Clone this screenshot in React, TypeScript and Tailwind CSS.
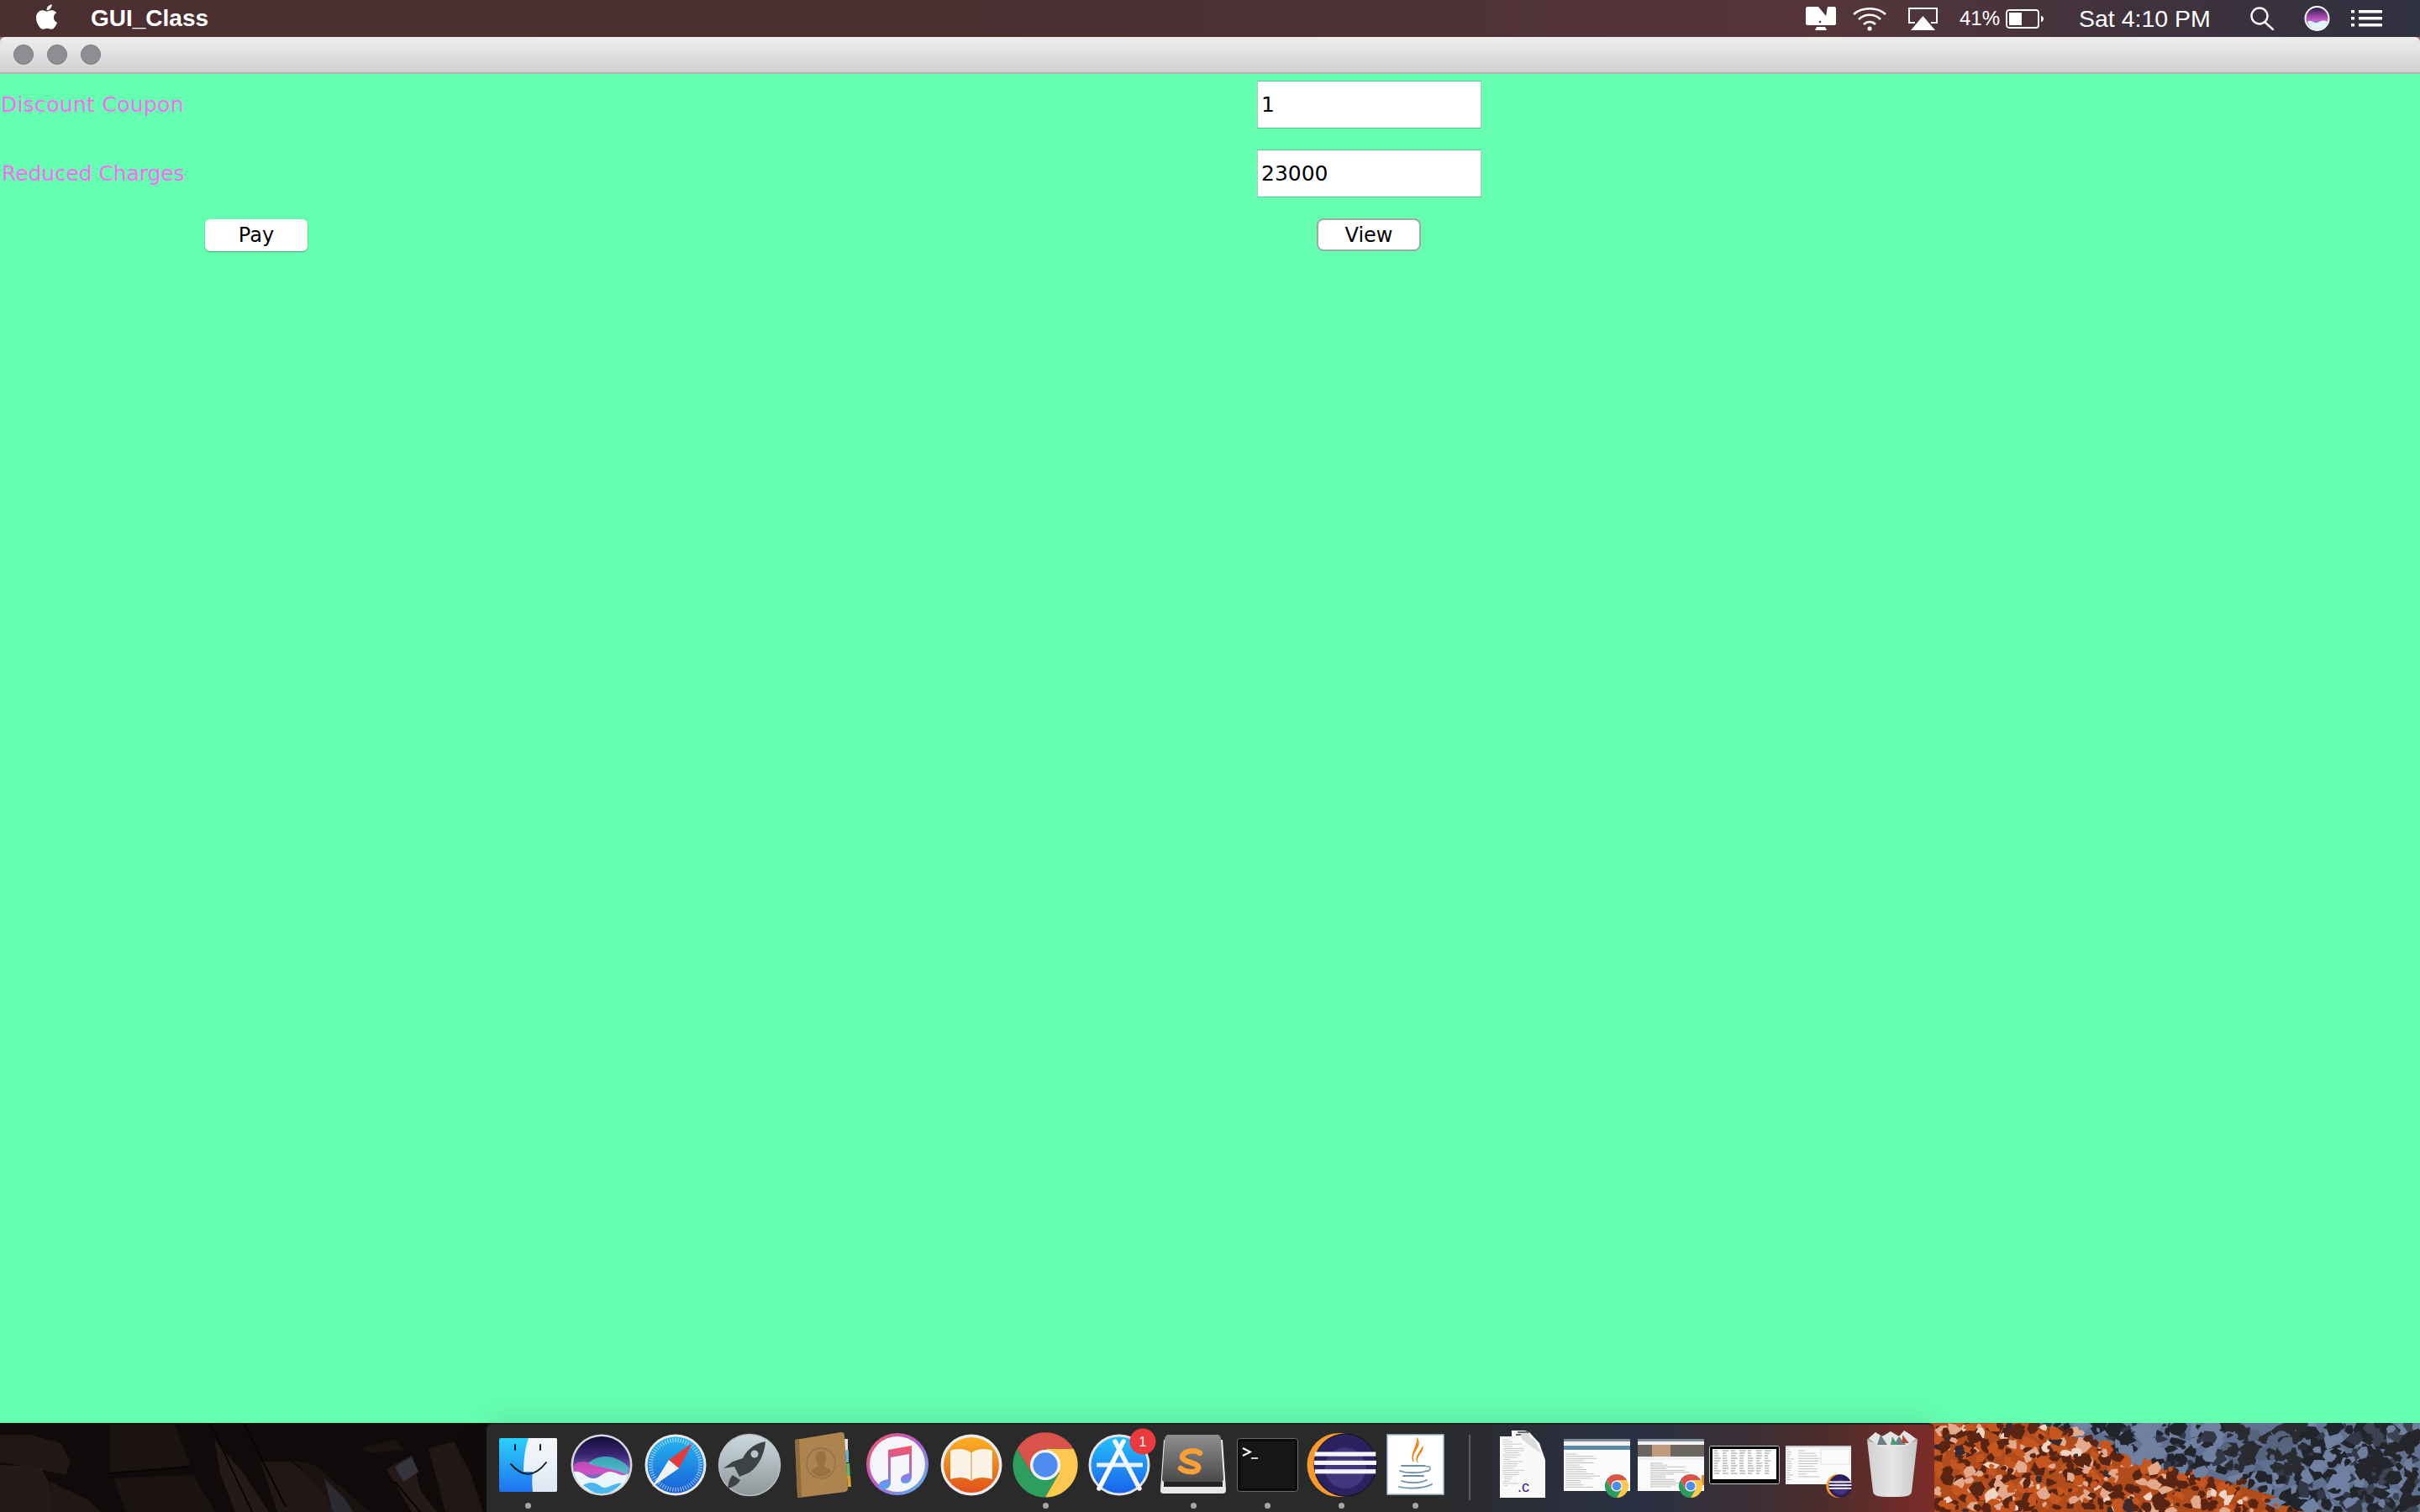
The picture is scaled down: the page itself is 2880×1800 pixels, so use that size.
import { FaApple } from 'react-icons/fa';

// small seeded random so the wallpaper and the thumbnails come out the same every time
function makeRandom(seed: number) {
  let s = seed;
  return () => {
    s = (s * 16807) % 2147483647;
    return (s - 1) / 2147483646;
  };
}

function blob(rand: () => number, x: number, y: number, w: number, h: number) {
  const pts: string[] = [];
  for (let i = 0; i < 6; i++) {
    const a = (i / 6) * Math.PI * 2;
    const k = 0.5 + rand() * 0.7;
    pts.push(`${(x + Math.cos(a) * w * k).toFixed(1)},${(y + Math.sin(a) * h * k).toFixed(1)}`);
  }
  return pts.join(' ');
}

const MOUNTAIN = (() => {
  const rand = makeRandom(4711);
  const items: { points: string; fill: string }[] = [];
  for (let i = 0; i < 1000; i++) {
    const x = rand() * 578;
    const y = rand() * 106;
    const edge = 120 + y * 3.2 + 25 * Math.sin(y / 9);
    const orange = x < edge;
    const r = rand();
    let fill: string;
    if (orange) {
      fill = r < 0.42 ? '#5a2412' : r < 0.58 ? '#e3a98c' : r < 0.64 ? '#f2d4c4' : r < 0.95 ? '#c5561f' : '#3a2a2e';
    } else if (x > 345 && x < 440 && y < 60) {
      fill = r < 0.78 ? '#2a2b31' : '#56647e';
    } else if (x > 510) {
      fill = r < 0.6 ? '#25262c' : r < 0.85 ? '#3d4350' : '#6d7f9c';
    } else {
      fill = r < 0.42 ? '#22242b' : r < 0.55 ? '#323846' : '#6f80a0';
    }
    const size = orange ? 3 + rand() * 7 : 3 + rand() * 10;
    items.push({ points: blob(rand, x, y, size, size * (0.6 + rand() * 0.6)), fill });
  }
  return items;
})();

const ROCKS = [
  '0,14 35,14 72,24 84,46 78,62 40,54 0,46',
  '130,2 208,2 226,50 180,56 130,60',
  '0,50 48,52 60,75 62,106 0,106',
  '60,70 105,92 120,106 62,106',
  '135,66 230,62 256,106 150,106',
  '255,20 290,60 320,106 280,106 262,60',
  '310,46 345,46 378,70 400,106 330,106',
  '350,45 375,50 440,106 400,106 372,68',
  '460,55 490,38 500,80 520,106 490,106',
  '510,30 540,22 560,60 575,106 530,106',
  '430,30 470,20 480,32 440,36',
];

function LeftWallpaper() {
  return (
    <svg viewBox="0 0 579 106" preserveAspectRatio="none" className="block h-full w-[579px] shrink-0">
      <rect width="579" height="106" fill="#100b0a" />
      {ROCKS.map((p, i) => (
        <polygon key={i} points={p} fill={i % 3 === 0 ? '#211816' : i % 3 === 1 ? '#1b1311' : '#251a17'} />
      ))}
      <polygon points="470,52 490,40 498,58 480,70" fill="#35343a" />
      <polygon points="386,66 410,90 420,106 396,106" fill="#2c2b31" />
      <path d="M250 0L300 106M290 0L340 100M470 70L500 106M130 60L226 52" stroke="#080505" strokeWidth="2" fill="none" />
    </svg>
  );
}

function RightWallpaper() {
  return (
    <svg viewBox="0 0 578 106" preserveAspectRatio="none" className="block h-full min-w-0 flex-1">
      <rect width="578" height="106" fill="#5f7090" />
      <polygon points="0,0 125,0 200,30 300,55 465,106 0,106" fill="#b04c1c" />
      {MOUNTAIN.map((b, i) => (
        <polygon key={i} points={b.points} fill={b.fill} />
      ))}
    </svg>
  );
}

function Finder() {
  return (
    <>
      <defs>
        <linearGradient id="finderBlue" x1="0" y1="0" x2="0" y2="1">
          <stop offset="0" stopColor="#2bd0fb" />
          <stop offset="1" stopColor="#1f72f0" />
        </linearGradient>
        <linearGradient id="finderWhite" x1="0" y1="0" x2="0" y2="1">
          <stop offset="0" stopColor="#f6f8fa" />
          <stop offset="1" stopColor="#dce8f3" />
        </linearGradient>
      </defs>
      <rect x="10" y="12" width="69" height="64" rx="2" fill="url(#finderBlue)" />
      <path d="M45 12H77a2 2 0 0 1 2 2V74a2 2 0 0 1-2 2H50C49 66 49 60 50 52H39C39 36 41 24 45 12Z" fill="url(#finderWhite)" />
      <path d="M29 20V26M59 20V26" stroke="#1a1a22" strokeWidth="2" strokeLinecap="round" />
      <path d="M24 43C38 59 52 59 66 41" fill="none" stroke="#1a1a22" strokeWidth="2" strokeLinecap="round" />
    </>
  );
}

function Siri() {
  return (
    <>
      <defs>
        <linearGradient id="siriBg" x1="0" y1="0" x2="0" y2="1">
          <stop offset="0" stopColor="#120a36" />
          <stop offset="0.35" stopColor="#3c2a78" />
          <stop offset="0.6" stopColor="#8a62b4" />
          <stop offset="1" stopColor="#2c86d8" />
        </linearGradient>
      </defs>
      <circle cx="44" cy="44" r="36.5" fill="#d8d8dc" />
      <circle cx="44" cy="44" r="34" fill="url(#siriBg)" />
      <path d="M11 44C20 36 32 42 42 46S60 44 76 52L74 60C58 54 30 54 13 58Z" fill="#e34bc3" opacity="0.75" />
      <path d="M28 42C36 34 50 32 60 36S72 42 77 48L74 56C60 48 42 48 28 42Z" fill="#35d8d0" opacity="0.7" />
      <path d="M11 52C20 50 26 60 34 60S46 52 54 52 68 60 76 54C74 66 62 78 44 78S14 66 11 52Z" fill="#eaf7fc" />
      <path d="M22 68C32 62 38 66 44 70S60 64 68 66C60 74 54 78 44 78S30 74 22 68Z" fill="#4bb6ee" />
    </>
  );
}

function Safari() {
  const ticks = Array.from({ length: 60 }, (_, i) => (i / 60) * Math.PI * 2);
  return (
    <>
      <defs>
        <linearGradient id="safariBg" x1="0" y1="0" x2="0" y2="1">
          <stop offset="0" stopColor="#24b6ee" />
          <stop offset="1" stopColor="#1a5fd8" />
        </linearGradient>
      </defs>
      <circle cx="44" cy="44" r="36.5" fill="#e8e8ec" />
      <circle cx="44" cy="44" r="33.5" fill="url(#safariBg)" />
      {ticks.map((a, i) => (
        <line
          key={i}
          x1={44 + Math.cos(a) * 32}
          y1={44 + Math.sin(a) * 32}
          x2={44 + Math.cos(a) * 27}
          y2={44 + Math.sin(a) * 27}
          stroke="#ffffff"
          strokeWidth="0.8"
          opacity="0.85"
        />
      ))}
      <polygon points="64,18 48,48 36,38" fill="#e63a3a" />
      <polygon points="16,70 48,48 36,38" fill="#f2f2f2" />
    </>
  );
}

function Launchpad() {
  return (
    <>
      <defs>
        <linearGradient id="lpBg" x1="0" y1="0" x2="0" y2="1">
          <stop offset="0" stopColor="#cbdae0" />
          <stop offset="1" stopColor="#8e9698" />
        </linearGradient>
      </defs>
      <circle cx="44" cy="44" r="36.5" fill="url(#lpBg)" stroke="#b9bec0" strokeWidth="1.5" />
      <path d="M63 16C52 18 42 24 36 36L24 40 13 48 26 46 32 58 44 53C54 46 62 32 63 16Z" fill="#3c4245" />
      <path d="M24 56C20 60 19 66 18 72 24 70 30 68 33 62Z" fill="#3c4245" />
      <circle cx="50" cy="31" r="4.5" fill="#b8c4ca" />
    </>
  );
}

function Contacts() {
  return (
    <>
      <path d="M68 13H73V31H70Z" fill="#e2e2e2" />
      <path d="M70 26L74 27V41H71Z" fill="#5fb8d6" />
      <path d="M71 42L75 42 76 59H72Z" fill="#62b568" />
      <path d="M72 57H76L77 70H73Z" fill="#dda22e" />
      <path d="M10 14L65 5C68 5 69 7 69 9L73 72C73 74 72 75 70 76L15 83C13 83 13 82 13 80Z" fill="#ad8450" />
      <path d="M10 14L15 13 18 82 13 83Z" fill="#8f6a3c" />
      <ellipse cx="41" cy="42" rx="17" ry="18" fill="none" stroke="#947042" strokeWidth="1.4" />
      <path d="M41 28C46 28 48 33 47 38 46 42 44 44 45 46L53 50C50 55 46 58 41 58S32 55 29 50L37 46C38 44 36 42 35 38 34 33 36 28 41 28Z" fill="#98733f" />
    </>
  );
}

function Music() {
  return (
    <>
      <defs>
        <linearGradient id="itRing" x1="0" y1="0" x2="1" y2="1">
          <stop offset="0" stopColor="#f9575b" />
          <stop offset="0.5" stopColor="#b35fd0" />
          <stop offset="1" stopColor="#45c3f4" />
        </linearGradient>
        <linearGradient id="itNote" x1="0" y1="0" x2="0" y2="1">
          <stop offset="0" stopColor="#f95260" />
          <stop offset="0.6" stopColor="#a06fe0" />
          <stop offset="1" stopColor="#4aa8f4" />
        </linearGradient>
      </defs>
      <circle cx="44" cy="43" r="37" fill="url(#itRing)" />
      <circle cx="44" cy="43" r="33" fill="#f4f5f8" />
      <path d="M33 26L61 21V58C61 63 57 66 53 66 49 66 48 63 48 61 48 58 51 56 54 55L58 54V31L36 35V65C36 70 32 73 27 73 24 73 22 71 22 68 22 65 25 63 29 62L33 61Z" fill="url(#itNote)" />
    </>
  );
}

function Books() {
  return (
    <>
      <defs>
        <linearGradient id="ibBg" x1="0" y1="0" x2="0" y2="1">
          <stop offset="0" stopColor="#fbb224" />
          <stop offset="1" stopColor="#e0501c" />
        </linearGradient>
      </defs>
      <circle cx="44" cy="44" r="36.5" fill="#ececec" />
      <circle cx="44" cy="44" r="33" fill="url(#ibBg)" />
      <path d="M44 30C38 24 26 24 19 27V61C28 58 38 58 44 63 50 58 60 58 69 61V27C62 24 50 24 44 30Z" fill="#fbf3e6" />
      <path d="M44 30V63" stroke="#d9a560" strokeWidth="1.2" />
    </>
  );
}

function ChromeMark({ cx, cy, r }: { cx: number; cy: number; r: number }) {
  return (
    <g transform={`translate(${cx} ${cy}) scale(${r})`}>
      <path d="M-.87-.5A1 1 0 0 1 .87-.5L0-.5-.43.25Z" fill="#d9534a" />
      <path d="M-.87-.5A1 1 0 0 0 0 1L.43.25H-.43Z" fill="#2e9e5f" />
      <path d="M.87-.5A1 1 0 0 1 0 1L.43.25 0-.5Z" fill="#fcc84e" />
      <circle r="0.47" fill="#f4f4f4" />
      <circle r="0.38" fill="#4d8df2" />
    </g>
  );
}

function AppStore() {
  return (
    <>
      <defs>
        <linearGradient id="asBg" x1="0" y1="0" x2="0" y2="1">
          <stop offset="0" stopColor="#25c0fb" />
          <stop offset="1" stopColor="#1a62ec" />
        </linearGradient>
      </defs>
      <circle cx="44" cy="44" r="36.5" fill="#e4e4e8" />
      <circle cx="44" cy="44" r="33.5" fill="url(#asBg)" />
      <path d="M17 44H72" stroke="#e8f0ff" strokeWidth="5" />
      <path d="M49 16L20 72" stroke="#ffffff" strokeWidth="5.5" strokeLinecap="round" />
      <path d="M39 16L68 72" stroke="#f2f6ff" strokeWidth="5.5" strokeLinecap="round" />
      <circle cx="72" cy="16" r="15.5" fill="#ea3a3e" />
      <text x="72" y="22" textAnchor="middle" fontSize="16" fontFamily="'Liberation Sans', sans-serif" fill="#ffffff">
        1
      </text>
    </>
  );
}

function Sublime() {
  return (
    <>
      <defs>
        <linearGradient id="stBg" x1="0" y1="0" x2="0" y2="1">
          <stop offset="0" stopColor="#8f8f8f" />
          <stop offset="1" stopColor="#4a4a4a" />
        </linearGradient>
      </defs>
      <path d="M9 14H79L83 74C83 77 81 78 79 78H9C6 78 5 77 5 74Z" fill="#e8e8e8" />
      <path d="M10 15C10 10 12 8 15 8H72C75 8 77 10 77 13L80 60C80 63 79 64 77 64H10C8 64 7 63 7 61Z" fill="url(#stBg)" />
      <rect x="9" y="64" width="70" height="6" fill="#232323" />
      <path d="M52 30C46 25 33 27 31 34 30 41 52 41 50 48 48 54 35 53 29 48" fill="none" stroke="#f7a035" strokeWidth="6.5" strokeLinecap="round" />
    </>
  );
}

function Terminal() {
  return (
    <>
      <rect x="8.5" y="12.5" width="72" height="63" rx="3" fill="#0c0c0c" stroke="#6c6c70" strokeWidth="1" />
      <rect x="12" y="16" width="65" height="56" fill="#161616" />
      <path d="M15 24L24 28.5 15 33" fill="none" stroke="#ffffff" strokeWidth="2" />
      <path d="M25 36H33" stroke="#ffffff" strokeWidth="1.6" />
    </>
  );
}

function EclipseMark({ cx, cy, r }: { cx: number; cy: number; r: number }) {
  return (
    <g transform={`translate(${cx} ${cy}) scale(${r})`}>
      <circle cx="-0.2" r="1.03" fill="#f79a2e" />
      <circle r="1" fill="#2c2260" stroke="#14102e" strokeWidth="0.03" />
      <circle cy="0.1" r="0.66" fill="#43367e" />
      <rect x="-0.98" y="-0.42" width="1.96" height="0.14" fill="#f4f4fa" />
      <rect x="-1" y="-0.14" width="2" height="0.14" fill="#f4f4fa" />
      <rect x="-0.98" y="0.14" width="1.96" height="0.14" fill="#f4f4fa" />
    </g>
  );
}

function Java() {
  return (
    <>
      <rect x="11" y="8" width="67" height="71" fill="#ffffff" stroke="#a6bfd6" strokeWidth="1.5" />
      <path d="M47 13C52 24 38 28 42 40 38 32 46 24 47 13Z" fill="#e98b1c" stroke="#e98b1c" strokeWidth="1.4" />
      <path d="M53 22C54 30 44 34 47 41 43 34 50 29 53 22Z" fill="#e98b1c" stroke="#e98b1c" strokeWidth="1" />
      <path d="M28 45H56M26 51C34 54 50 54 58 51M30 57H54M28 63C36 66 50 66 58 62M25 70C36 73 54 72 64 67" fill="none" stroke="#6b8fa8" strokeWidth="1.8" strokeLinecap="round" />
      <path d="M57 46C63 44 64 50 58 52" fill="none" stroke="#6b8fa8" strokeWidth="1.4" />
    </>
  );
}

function DocFile() {
  const rand = makeRandom(77);
  return (
    <>
      <path d="M17 10H31V3H47L52 5 64 18 71 38V83H17Z" fill="#f9f9f9" />
      <path d="M40 5L52 5 52 10 58 14 66 30 54 22 44 14Z" fill="#dcdcdc" />
      <path d="M36 8H42M38 5H52" stroke="#6a6a6a" strokeWidth="2" />
      {Array.from({ length: 22 }, (_, i) => (
        <line key={i} x1={20 + rand() * 3} x2={26 + rand() * 20} y1={14 + i * 2.6} y2={14 + i * 2.6} stroke="#b4b4b4" strokeWidth="0.7" />
      ))}
      <text x="38" y="76" fontSize="18" fontFamily="'Liberation Sans', sans-serif" fill="#44209a">
        .c
      </text>
    </>
  );
}

function ThumbLines({ x, y, w, h, seed, rows }: { x: number; y: number; w: number; h: number; seed: number; rows: number }) {
  const rand = makeRandom(seed);
  const step = h / rows;
  return (
    <>
      {Array.from({ length: rows }, (_, i) => (
        <line key={i} x1={x} x2={x + w * (0.3 + rand() * 0.7)} y1={y + i * step} y2={y + i * step} stroke="#a8a8a8" strokeWidth="0.7" />
      ))}
    </>
  );
}

function WebThumb({ hero }: { hero: boolean }) {
  return (
    <>
      <rect x="5" y="13" width="79" height="62" fill="#fbfbfb" />
      <rect x="5" y="13" width="79" height="3" fill="#7c8c96" />
      <rect x="5" y="16" width="79" height="4" fill="#f0f0f0" />
      {hero ? (
        <>
          <rect x="5" y="20" width="79" height="14" fill="#6a6660" />
          <rect x="22" y="20" width="22" height="14" fill="#c09a7c" />
          <rect x="5" y="34" width="79" height="4" fill="#eef2f6" />
          <ThumbLines x={20} y={42} w={48} h={30} seed={9} rows={14} />
        </>
      ) : (
        <>
          <rect x="5" y="21" width="79" height="5" fill="#5d8aa8" />
          <ThumbLines x={7} y={31} w={44} h={42} seed={5} rows={16} />
        </>
      )}
    </>
  );
}

function TableThumb() {
  const rand = makeRandom(31);
  return (
    <>
      <rect x="2.5" y="21.5" width="83" height="45" rx="2" fill="#000000" stroke="#c8c8c8" strokeWidth="1" />
      <rect x="6" y="25" width="76" height="36" fill="#ffffff" />
      {Array.from({ length: 70 }, (_, i) => (
        <line key={i} x1={8 + (i % 7) * 10} x2={8 + (i % 7) * 10 + 4 + rand() * 4} y1={27 + (i % 10) * 3} y2={27 + (i % 10) * 3} stroke="#777777" strokeWidth="0.8" />
      ))}
    </>
  );
}

function IdeThumb() {
  return (
    <>
      <rect x="5" y="21" width="78" height="46" fill="#fbfbfb" />
      <rect x="5" y="21" width="78" height="2" fill="#c9c9c9" />
      <ThumbLines x={6} y={26} w={10} h={38} seed={11} rows={14} />
      <ThumbLines x={20} y={27} w={26} h={34} seed={13} rows={11} />
      <rect x="47" y="25" width="34" height="18" fill="none" stroke="#d4d4d4" strokeWidth="0.7" />
    </>
  );
}

function Trash() {
  return (
    <>
      <defs>
        <linearGradient id="trashBg" x1="0" y1="0" x2="1" y2="0">
          <stop offset="0" stopColor="#cfcfcf" />
          <stop offset="0.5" stopColor="#e6e6e6" />
          <stop offset="1" stopColor="#c8c8c8" />
        </linearGradient>
      </defs>
      <path d="M14 14L74 14 67 76C66 82 58 82 44 82S22 82 21 76Z" fill="url(#trashBg)" />
      <ellipse cx="44" cy="14" rx="30" ry="5" fill="#a9a9a9" />
      <path d="M16 12L24 5 32 10 42 4 52 10 58 3 66 8 72 13 60 22H28Z" fill="#e4e4e4" />
      <path d="M30 8L38 20H26ZM52 10L60 20H46Z" fill="#6f7c82" />
      <path d="M44 10L50 20H42Z" fill="#4b9d76" />
      <path d="M56 8L64 18H56Z" fill="#b04a3c" />
    </>
  );
}

const DOCK_APPS = [
  { key: 'finder', dot: true, icon: <Finder /> },
  { key: 'siri', dot: false, icon: <Siri /> },
  { key: 'safari', dot: false, icon: <Safari /> },
  { key: 'launchpad', dot: false, icon: <Launchpad /> },
  { key: 'contacts', dot: false, icon: <Contacts /> },
  { key: 'music', dot: false, icon: <Music /> },
  { key: 'books', dot: false, icon: <Books /> },
  { key: 'chrome', dot: true, icon: <ChromeMark cx={44} cy={44} r={38.5} /> },
  { key: 'appstore', dot: false, icon: <AppStore /> },
  { key: 'sublime', dot: true, icon: <Sublime /> },
  { key: 'terminal', dot: true, icon: <Terminal /> },
  { key: 'eclipse', dot: true, icon: <EclipseMark cx={49} cy={44} r={37} /> },
  { key: 'java', dot: true, icon: <Java /> },
];

const DOCK_MINIMIZED = [
  { key: 'doc', icon: <DocFile /> },
  { key: 'web1', icon: <><WebThumb hero={false} /><ChromeMark cx={68} cy={69} r={14} /></> },
  { key: 'web2', icon: <><WebThumb hero /><rect x="81" y="56" width="3" height="12" fill="#e8912e" /><ChromeMark cx={68} cy={69} r={14} /></> },
  { key: 'table', icon: <TableThumb /> },
  { key: 'ide', icon: <><IdeThumb /><EclipseMark cx={70} cy={69} r={13.5} /></> },
  { key: 'trash', icon: <Trash /> },
];

function DockSlot({ icon, dot }: { icon: React.ReactNode; dot?: boolean }) {
  return (
    <div className="flex w-[88px] shrink-0 flex-col items-center">
      <svg viewBox="0 0 88 84" className="block h-[84px] w-[88px] overflow-visible">
        {icon}
      </svg>
      {dot && <div className="mt-[5px] h-[7px] w-[7px] rounded-full bg-[#a8a8a8]" />}
    </div>
  );
}

function Dock() {
  return (
    <div className="flex h-[106px] items-stretch bg-[linear-gradient(90deg,#100b0a_50%,#b04c1c_50%)]">
      <LeftWallpaper />
      <div className="flex w-[1723px] shrink-0 rounded-t-[8px] border-t-2 border-t-[#222222] bg-[linear-gradient(90deg,#2a2a2a_0%,#2a2a2a_65%,#2b3040_76%,#2a3042_80%,#4a2d2c_92%,#7c2c28_100%)] pl-[5px] pt-[4px] shadow-[0_-2px_34px_rgba(0,0,0,0.12)]">
        {DOCK_APPS.map((app) => (
          <DockSlot key={app.key} icon={app.icon} dot={app.dot} />
        ))}
        <div className="flex w-[40px] shrink-0 justify-center">
          <div className="ml-[2px] mt-[8px] h-[78px] w-[1.5px] bg-[#5c5c5c]" />
        </div>
        {DOCK_MINIMIZED.map((item) => (
          <DockSlot key={item.key} icon={item.icon} />
        ))}
      </div>
      <RightWallpaper />
    </div>
  );
}

function MenuBar() {
  return (
    <div className="flex h-[44px] items-center justify-between bg-[linear-gradient(90deg,#4b2f31_0%,#4a2e30_40%,#52343a_72%,#53353a_76%,#2f3040_100%)] pl-[41px] pr-[45px] font-['Liberation_Sans',sans-serif] text-white">
      <div className="flex items-center">
        <FaApple className="mb-[4px] h-[34px] w-[29px]" />
        <span className="ml-[38px] text-[28px] font-bold leading-none">GUI_Class</span>
      </div>
      <div className="flex items-center">
        <svg viewBox="0 0 36 28" className="h-[28px] w-[36px]">
          <path d="M2 0H34C35 0 36 1 36 2V20C36 21 35 22 34 22H2C1 22 0 21 0 20V2C0 1 1 0 2 0Z" fill="#ffffff" />
          <path d="M13 24H23L25 28H11Z" fill="#ffffff" />
          <path d="M15 0L24 11 26 0Z" fill="#4f3237" />
          <circle cx="17" cy="18" r="1.3" fill="#4f3237" />
        </svg>
        <svg viewBox="0 0 42 29" className="ml-[19px] h-[29px] w-[42px]" fill="none" stroke="#ffffff" strokeWidth="2.6">
          <path d="M2 9C12 0 30 0 40 9" />
          <path d="M8 15C15 8 27 8 34 15" />
          <path d="M14 21C18 17 24 17 28 21" />
          <circle cx="21" cy="26" r="2.6" fill="#ffffff" stroke="none" />
        </svg>
        <svg viewBox="0 0 37 28" className="ml-[24px] h-[28px] w-[37px]" fill="none">
          <path d="M9 19H2V2H35V19H28" stroke="#ffffff" strokeWidth="2" />
          <path d="M18.5 11L33 28H4Z" fill="#ffffff" />
        </svg>
        <span className="ml-[25px] w-[45px] whitespace-nowrap text-[24px] leading-none">41%</span>
        <svg viewBox="0 0 46 23" className="ml-[10px] h-[23px] w-[46px]">
          <rect x="1" y="1" width="38" height="21" rx="3" fill="none" stroke="#ffffff" strokeWidth="1.8" />
          <rect x="4" y="4" width="15" height="15" fill="#ffffff" />
          <path d="M42 8C44 8 45 10 45 11.5S44 15 42 15Z" fill="#ffffff" />
        </svg>
        <span className="ml-[41px] w-[155px] whitespace-nowrap text-[28.5px] leading-none">Sat 4:10 PM</span>
        <svg viewBox="0 0 30 28" className="ml-[48px] h-[28px] w-[30px]" fill="none" stroke="#ffffff" strokeWidth="2.4">
          <circle cx="12" cy="11" r="9.5" />
          <path d="M18 18L28 27" strokeLinecap="round" />
        </svg>
        <svg viewBox="0 0 31 32" className="ml-[35px] h-[32px] w-[31px]">
          <defs>
            <linearGradient id="menuSiri" x1="0" y1="0" x2="0" y2="1">
              <stop offset="0" stopColor="#27204d" />
              <stop offset="0.55" stopColor="#c654c6" />
              <stop offset="1" stopColor="#5ec3ee" />
            </linearGradient>
          </defs>
          <circle cx="15.5" cy="16" r="15" fill="#ffffff" />
          <circle cx="15.5" cy="16" r="13" fill="url(#menuSiri)" />
          <path d="M4 20C9 16 12 23 16 21S23 17 28 20C26 26 21 29 15.5 29S6 26 4 20Z" fill="#dff4fb" />
        </svg>
        <svg viewBox="0 0 37 20" className="ml-[25px] h-[20px] w-[37px]" fill="#ffffff">
          <rect x="0" y="0" width="4" height="3.5" />
          <rect x="0" y="8" width="4" height="3.5" />
          <rect x="0" y="16" width="4" height="3.5" />
          <rect x="9" y="0" width="28" height="3.5" />
          <rect x="9" y="8" width="28" height="3.5" />
          <rect x="9" y="16" width="28" height="3.5" />
        </svg>
      </div>
    </div>
  );
}

function TitleBar() {
  return (
    <div className="bg-[#a96f70]">
      <div className="flex h-[44px] items-center gap-[16px] rounded-t-[6px] border-b-2 border-b-[#b4b4b4] bg-[linear-gradient(180deg,#ededed_0%,#d2d2d2_100%)] pl-[16px]">
        <div className="h-[24px] w-[24px] rounded-full border border-[#7a787e] bg-[#908e94]" />
        <div className="h-[24px] w-[24px] rounded-full border border-[#7a787e] bg-[#908e94]" />
        <div className="h-[24px] w-[24px] rounded-full border border-[#7a787e] bg-[#908e94]" />
      </div>
    </div>
  );
}

function Field({ value }: { value: string }) {
  return (
    <div className="flex h-[57px] items-center border border-y-[#55c792] border-x-[#b9c9c1] bg-white pl-[4px] text-[25px] text-black">
      {value}
    </div>
  );
}

export default function App() {
  return (
    <div className="flex h-[1800px] w-[2880px] flex-col overflow-hidden bg-[#66ffb2] font-['DejaVu_Sans',sans-serif]">
      <MenuBar />
      <TitleBar />

      {/* Form */}
      <div className="flex-1 pt-[8px]">
        <div className="grid grid-cols-[1496px_267px] items-center gap-y-[25px]">
          <div className="pl-[1px] text-[25px] tracking-[0.3px] text-[#ff69f5]">Discount Coupon</div>
          <Field value="1" />
          <div className="pl-[2px] text-[25px] tracking-[-0.1px] text-[#ff69f5]">Reduced Charges</div>
          <Field value="23000" />
          <button className="ml-[244px] h-[38px] w-[122px] rounded-[6px] bg-white text-[24px] text-black shadow-[0_1px_2px_rgba(0,0,0,0.35)]">
            Pay
          </button>
          <button className="mr-[1px] h-[39px] w-[124px] justify-self-center rounded-[8px] border-2 border-[#9ea9a3] bg-white text-[24px] text-black">
            View
          </button>
        </div>
      </div>

      <Dock />
    </div>
  );
}
